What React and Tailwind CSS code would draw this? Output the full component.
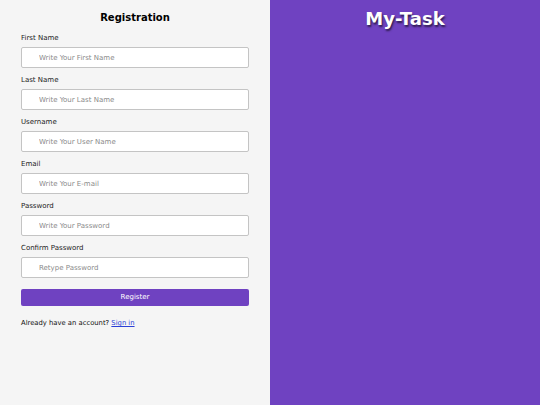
const fields = [
  { label: "First Name", placeholder: "Write Your First Name" },
  { label: "Last Name", placeholder: "Write Your Last Name" },
  { label: "Username", placeholder: "Write Your User Name" },
  { label: "Email", placeholder: "Write Your E-mail" },
  { label: "Password", placeholder: "Write Your Password", type: "password" },
  { label: "Confirm Password", placeholder: "Retype Password", type: "password" },
];

export default function App() {
  return (
    <div className="flex w-[540px] h-[405px] font-['DejaVu_Sans',sans-serif]">
      {/* Form side */}
      <div className="w-[270px] h-full bg-[#f5f5f5] px-[21px] pt-[12px]">
        <h1 className="text-center text-[10px] leading-[12px] font-bold text-black">
          Registration
        </h1>
        <form className="mt-[10px]" onSubmit={(e) => e.preventDefault()}>
          {fields.map((f) => (
            <div key={f.label} className="mb-[8px]">
              <label className="block text-[7px] leading-[8px] text-[#222] mb-[5px]">
                {f.label}
              </label>
              <input
                type={f.type || "text"}
                placeholder={f.placeholder}
                className="block w-full h-[21px] bg-white border border-[#c4c4c4] rounded-[2px] pl-[17px] text-[7px] placeholder:text-[#8a8a8a] outline-none"
              />
            </div>
          ))}
          <button
            type="submit"
            className="block w-full h-[17px] mt-[11px] bg-[#6f42c1] text-white text-[7px] rounded-[2px]"
          >
            Register
          </button>
        </form>
        <p className="mt-[13px] text-[6.8px] leading-[8px] text-[#111]">
          Already have an account?{" "}
          <a href="#" className="text-[#2a3fd6] underline">
            Sign in
          </a>
        </p>
      </div>

      {/* Brand side */}
      <div className="flex-1 h-full bg-[#6f42c1] pt-[8px]">
        <h2 className="text-center text-[18px] leading-[22px] font-bold text-white [text-shadow:1px_2px_2px_rgba(0,0,0,0.6)]">
          My-Task
        </h2>
      </div>
    </div>
  );
}
